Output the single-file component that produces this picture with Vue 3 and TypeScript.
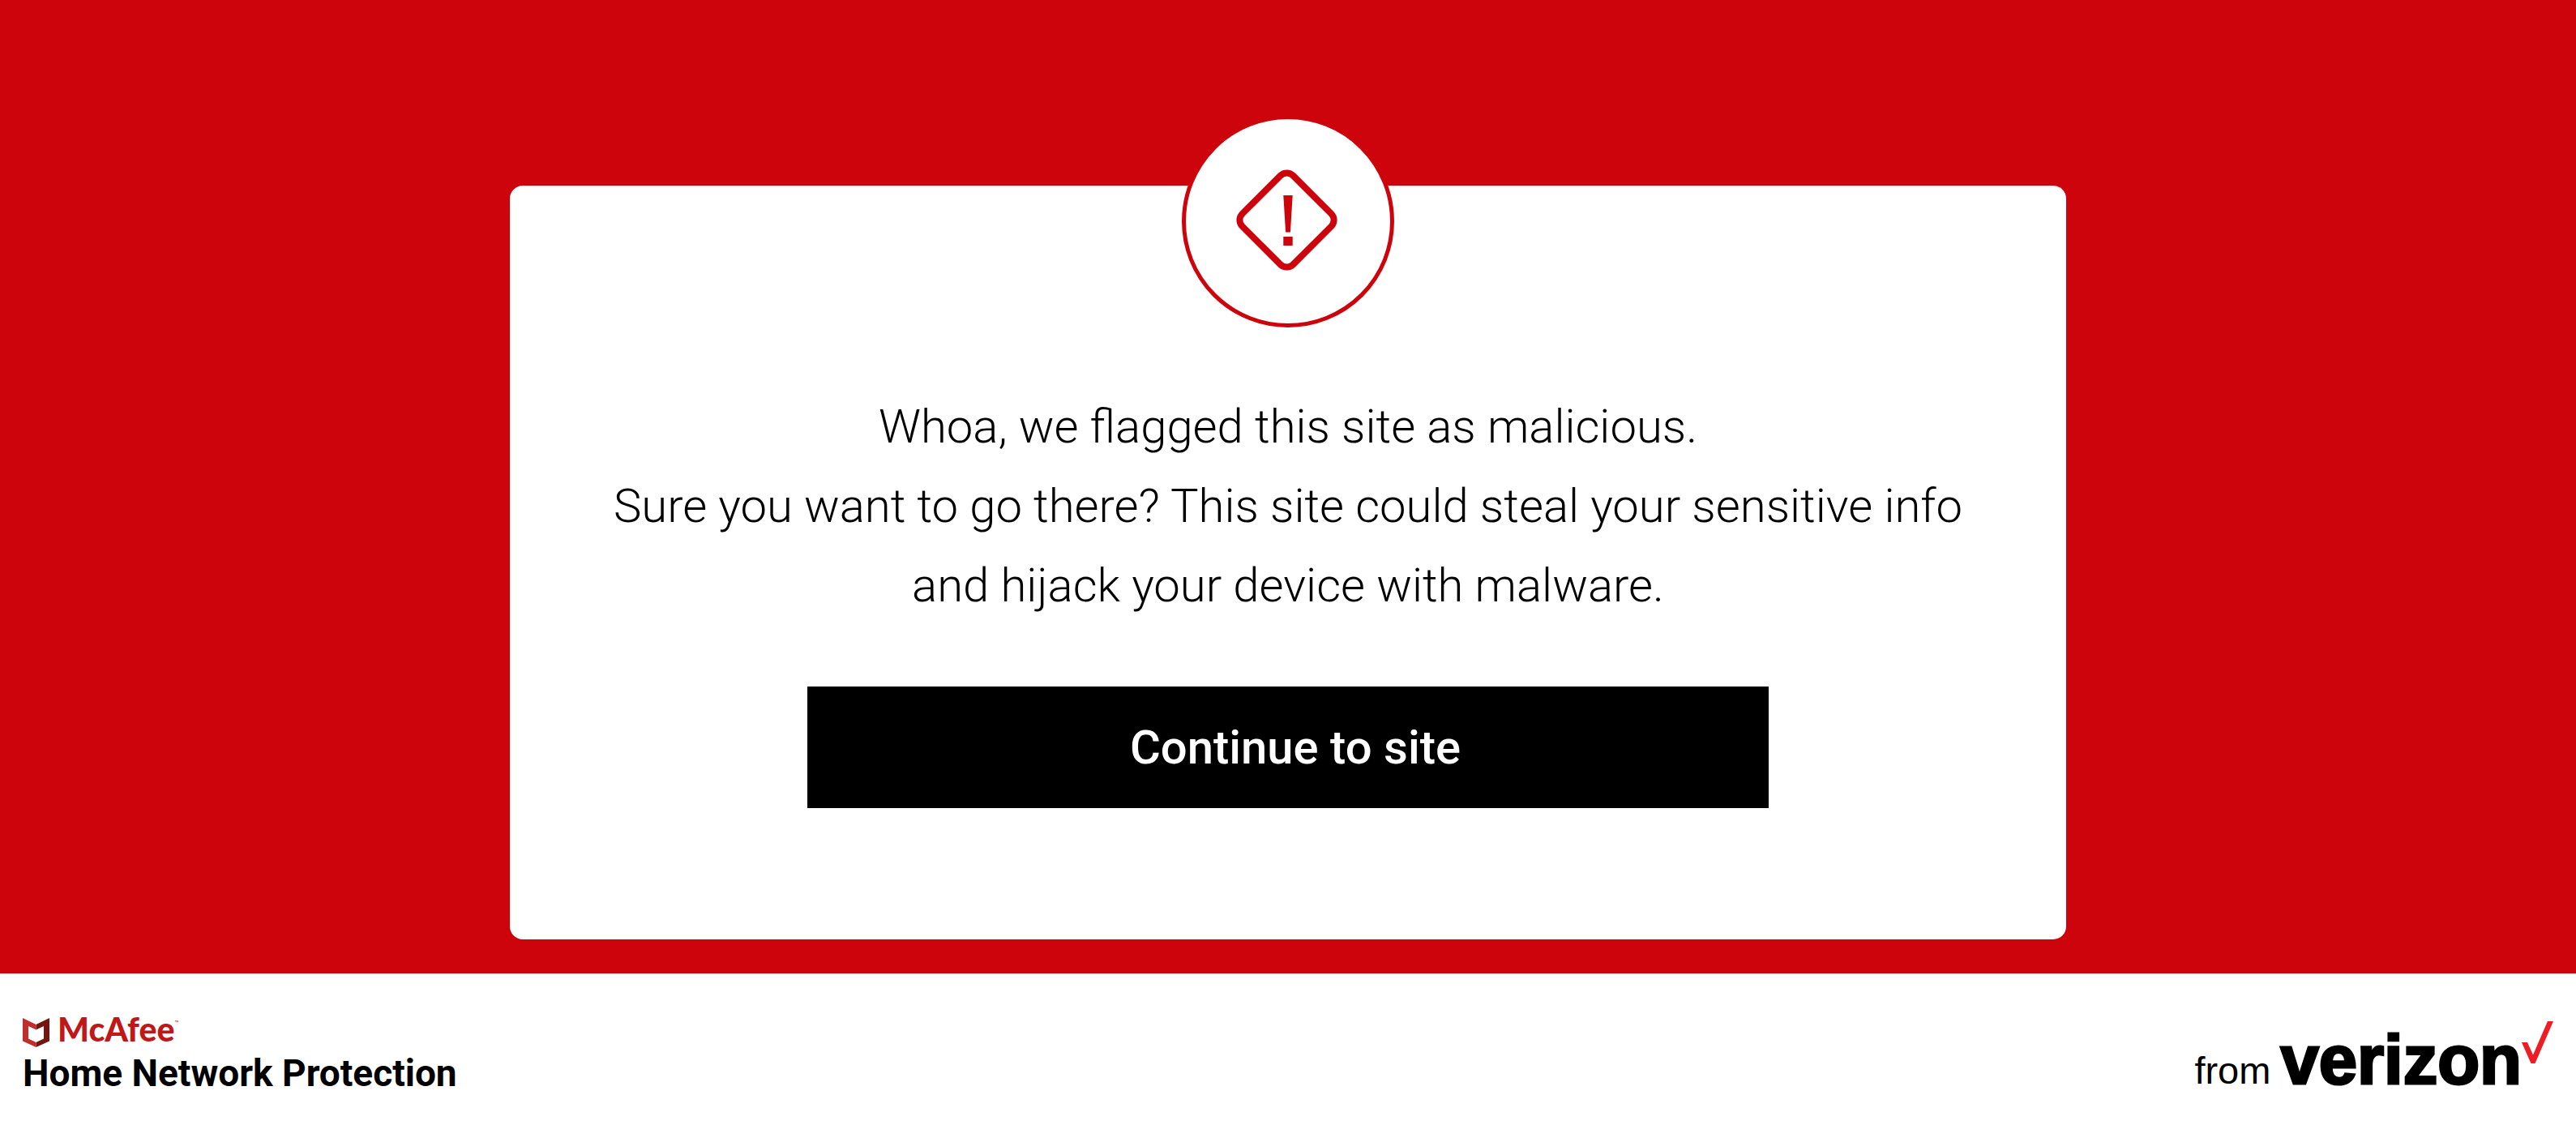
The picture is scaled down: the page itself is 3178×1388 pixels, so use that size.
<script setup lang="ts">
const messageLines: string[] = [
  'Whoa, we flagged this site as malicious.',
  'Sure you want to go there? This site could steal your sensitive info',
  'and hijack your device with malware.',
]
</script>

<template>
  <div class="page">
    <main class="hero">
      <section class="card" aria-labelledby="warning-text">
        <svg class="badge" viewBox="0 0 262 262" role="img" aria-label="Warning">
          <circle cx="131" cy="131" r="128.5" fill="#fff" stroke="#cd040b" stroke-width="5" />
          <rect x="85.2" y="85.2" width="88.6" height="88.6" rx="11" fill="none" stroke="#cd040b" stroke-width="8" transform="rotate(45 129.5 129.5)" />
          <path d="M125.3 99h11.4l-2.8 45.5h-5.8z M125.3 150h11.4v11h-11.4z" fill="#cd040b" />
        </svg>
        <h1 id="warning-text" class="message">
          <span v-for="line in messageLines" :key="line" class="line">{{ line }}</span>
        </h1>
        <button type="button" class="continue">Continue to site</button>
      </section>
    </main>

    <footer class="footer">
      <div class="product">
        <div class="mcafee">
          <svg class="shield" viewBox="0 0 33 36" aria-hidden="true">
            <path d="M0 0l16.5 8v6.500L7 10v15.500l9.500 4.500v6L0 28.500z" fill="#c12d2b" />
            <path d="M33 0l-16.500 8v6.500L26 10v15.500l-9.500 4.500v6L33 28.500z" fill="#74150f" />
          </svg>
          <span class="mcafee-name">McAfee</span><span class="tm">™</span>
        </div>
        <div class="product-name">Home Network Protection</div>
      </div>
      <div class="brand">
        <span class="from">from</span>
        <span class="verizon">verizon</span>
        <svg class="check" viewBox="0 0 39 52" aria-hidden="true">
          <path d="M0 26h7l7 15.500L32 0H39L16.500 52h-5z" fill="#ee1c25" />
        </svg>
      </div>
    </footer>
  </div>
</template>

<style>
body {
  margin: 0;
  background: #fff;
}
</style>

<style scoped>
.page {
  color: #000;
  font-family: Roboto, "Liberation Sans", sans-serif;
}

.hero {
  display: flex;
  justify-content: center;
  padding: 229px 32px 42px;
  background: #cd040b;
}

.card {
  position: relative;
  box-sizing: border-box;
  display: flex;
  flex-direction: column;
  align-items: center;
  gap: 76px;
  width: 100%;
  max-width: 1920px;
  padding: 248px 32px 162px;
  border-radius: 16px;
  background: #fff;
}

.badge {
  position: absolute;
  top: -87px;
  left: 50%;
  width: 262px;
  margin-left: -131px;
}

.message {
  margin: 0;
  font-size: 58px;
  font-weight: 300;
  line-height: 98px;
  text-align: center;
}

.line {
  display: block;
}

.continue {
  box-sizing: border-box;
  width: 100%;
  max-width: 1186px;
  padding: 0 0 0 18px;
  border: 0;
  background: #000;
  color: #fff;
  font-family: inherit;
  font-size: 58px;
  font-weight: 500;
  line-height: 150px;
  cursor: pointer;
}

.footer {
  display: flex;
  justify-content: space-between;
  align-items: flex-start;
  padding: 48px 28px 40px;
}

.mcafee {
  display: flex;
  align-items: flex-start;
  height: 48px;
  padding-top: 7px;
  box-sizing: border-box;
}

.shield {
  width: 33px;
  margin-right: 10px;
}

.mcafee-name {
  color: #c01818;
  font-family: Lato, "Liberation Sans", sans-serif;
  font-size: 41px;
  font-weight: 900;
  line-height: 28px;
}

.tm {
  color: #c01818;
  font-size: 8px;
  line-height: 14px;
}

.product-name {
  font-size: 46px;
  font-weight: 700;
  line-height: 54px;
}

.brand {
  display: flex;
  align-items: baseline;
  padding-top: 11px;
  font-family: "Liberation Sans", Arial, sans-serif;
}

.from {
  font-size: 47px;
}

.verizon {
  margin-left: 12px;
  font-size: 85px;
  font-weight: 700;
  line-height: 96px;
  -webkit-text-stroke: 3px #000;
}

.check {
  width: 39px;
  align-self: flex-start;
}
</style>
